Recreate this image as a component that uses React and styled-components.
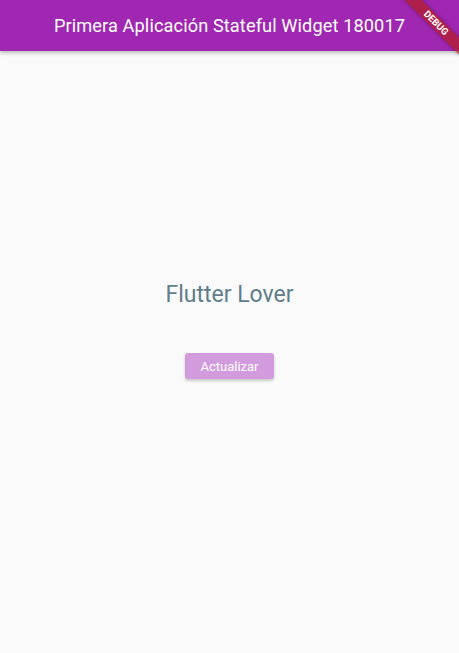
import React, { useState } from "react";
import styled, { createGlobalStyle } from "styled-components";

const Global = createGlobalStyle`
  html, body { margin: 0; padding: 0; background: #fafafa; }
  body { font-family: Roboto, "Noto Sans", sans-serif; }
  #root { width: 459px; height: 653px; }
`;

const Screen = styled.div`
  position: relative;
  width: 459px;
  height: 653px;
  overflow: hidden;
  background: #fafafa;
  display: flex;
  flex-direction: column;
`;

const AppBar = styled.header`
  height: 51px;
  flex: none;
  background: #9f27b1;
  box-shadow: 0 2px 4px rgba(0, 0, 0, 0.25);
  display: flex;
  align-items: center;
  justify-content: center;
  position: relative;
  z-index: 1;
`;

const Title = styled.h1`
  margin: 0;
  font-family: Roboto, sans-serif;
  font-weight: 400;
  font-size: 18.2px;
  color: #ffffff;
  letter-spacing: 0.1px;
`;

const Body = styled.main`
  flex: 1;
  display: flex;
  flex-direction: column;
  align-items: center;
  justify-content: center;
  gap: 45px;
  padding-bottom: 44px;
`;

const Message = styled.p`
  margin: 0;
  font-family: Roboto, sans-serif;
  font-size: 23px;
  line-height: 27px;
  color: #607d8b;
`;

const Button = styled.button`
  width: 89px;
  height: 26px;
  border: none;
  border-radius: 3px;
  background: #d29bdd;
  color: #ffffff;
  font-family: Roboto, sans-serif;
  font-size: 13px;
  box-shadow: 0 2px 3px rgba(0, 0, 0, 0.2);
  cursor: pointer;
  padding: 0;
`;

const Banner = styled.div`
  position: absolute;
  top: 23px;
  right: 23px;
  width: 80px;
  height: 12px;
  transform: translate(50%, -50%) rotate(45deg);
  background: rgba(183, 28, 28, 0.68);
  box-shadow: 0 0 4px rgba(0, 0, 0, 0.35);
  display: flex;
  align-items: center;
  justify-content: center;
  color: #ffffff;
  font-family: Roboto, sans-serif;
  font-weight: 700;
  font-size: 9.5px;
  line-height: 1;
  z-index: 2;
`;

export default function App() {
  const [text, setText] = useState("Flutter Lover");
  return (
    <>
      <Global />
      <Screen>
        <AppBar>
          <Title>Primera Aplicación Stateful Widget 180017</Title>
        </AppBar>
        <Body>
          <Message>{text}</Message>
          <Button onClick={() => setText("Flutter Lover")}>Actualizar</Button>
        </Body>
        <Banner>DEBUG</Banner>
      </Screen>
    </>
  );
}
